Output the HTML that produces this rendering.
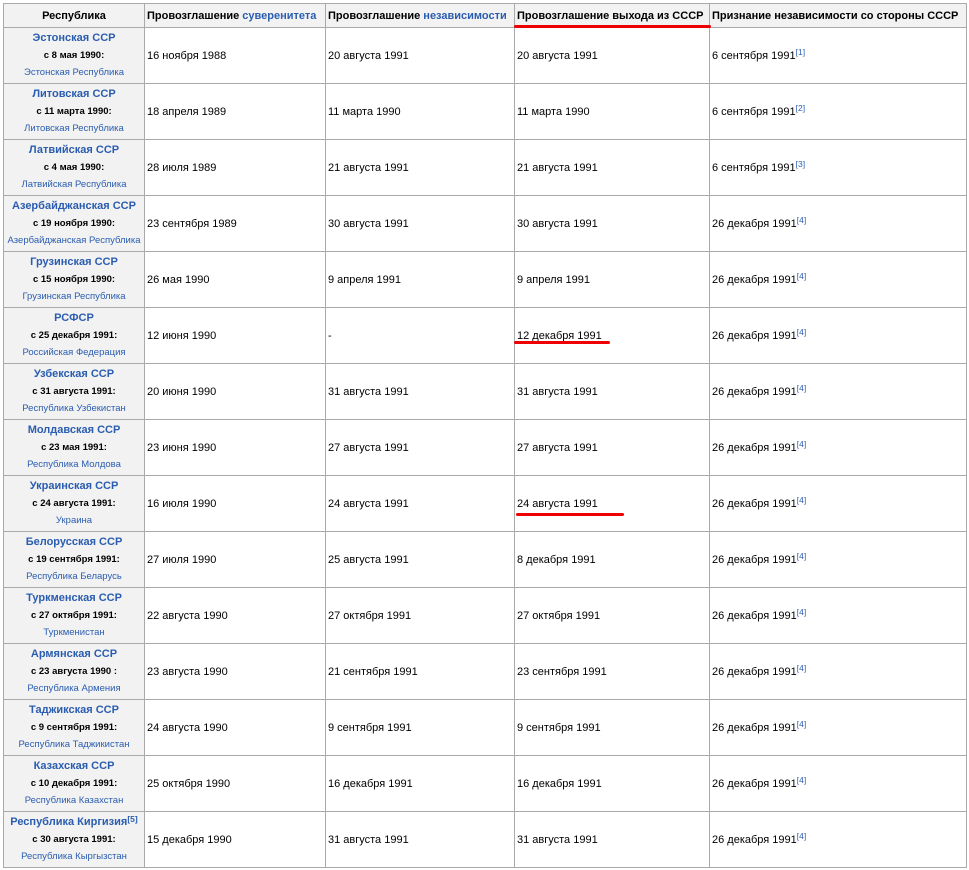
<!DOCTYPE html>
<html><head><meta charset="utf-8"><style>
body{margin:0;background:#fff;font-family:"Liberation Sans","DejaVu Sans",sans-serif;font-size:11px;color:#000}
table{position:absolute;left:3px;top:3px;border-collapse:collapse;table-layout:fixed;width:963px}
td,th{border:1px solid #aaa;padding:0 2px;overflow:hidden;white-space:nowrap}
th{background:#f2f2f2;height:23px;font-weight:bold;font-size:11px;text-align:center}
td{height:55px;font-size:11px}
td.r{background:#f2f2f2;text-align:center;line-height:17px;font-size:9.5px;font-weight:bold}
td.r a{font-size:11px}
a{color:#2a5db0;text-decoration:none}
td.r span.s{font-weight:normal;color:#2a5db0}
sup{font-size:8.5px;color:#2a5db0;vertical-align:top;position:relative;top:-3px}
.red{position:absolute;height:3px;background:#e00;border-radius:2px}
</style></head><body>
<table>
<colgroup><col style="width:141px"><col style="width:181px"><col style="width:189px"><col style="width:195px"><col style="width:257px"></colgroup>
<tr><th>Республика</th><th style="text-align:left">Провозглашение <a>суверенитета</a></th><th style="text-align:left">Провозглашение <a>независимости</a></th><th style="text-align:left">Провозглашение выхода из СССР</th><th style="text-align:left">Признание независимости со стороны СССР</th></tr>
<tr><td class="r"><a>Эстонская ССР</a><br>с 8 мая 1990:<br><span class="s">Эстонская Республика</span></td><td>16 ноября 1988</td><td>20 августа 1991</td><td>20 августа 1991</td><td>6 сентября 1991<sup>[1]</sup></td></tr>
<tr><td class="r"><a>Литовская ССР</a><br>с 11 марта 1990:<br><span class="s">Литовская Республика</span></td><td>18 апреля 1989</td><td>11 марта 1990</td><td>11 марта 1990</td><td>6 сентября 1991<sup>[2]</sup></td></tr>
<tr><td class="r"><a>Латвийская ССР</a><br>с 4 мая 1990:<br><span class="s">Латвийская Республика</span></td><td>28 июля 1989</td><td>21 августа 1991</td><td>21 августа 1991</td><td>6 сентября 1991<sup>[3]</sup></td></tr>
<tr><td class="r"><a>Азербайджанская ССР</a><br>с 19 ноября 1990:<br><span class="s">Азербайджанская Республика</span></td><td>23 сентября 1989</td><td>30 августа 1991</td><td>30 августа 1991</td><td>26 декабря 1991<sup>[4]</sup></td></tr>
<tr><td class="r"><a>Грузинская ССР</a><br>с 15 ноября 1990:<br><span class="s">Грузинская Республика</span></td><td>26 мая 1990</td><td>9 апреля 1991</td><td>9 апреля 1991</td><td>26 декабря 1991<sup>[4]</sup></td></tr>
<tr><td class="r"><a>РСФСР</a><br>с 25 декабря 1991:<br><span class="s">Российская Федерация</span></td><td>12 июня 1990</td><td>-</td><td>12 декабря 1991</td><td>26 декабря 1991<sup>[4]</sup></td></tr>
<tr><td class="r"><a>Узбекская ССР</a><br>с 31 августа 1991:<br><span class="s">Республика Узбекистан</span></td><td>20 июня 1990</td><td>31 августа 1991</td><td>31 августа 1991</td><td>26 декабря 1991<sup>[4]</sup></td></tr>
<tr><td class="r"><a>Молдавская ССР</a><br>с 23 мая 1991:<br><span class="s">Республика Молдова</span></td><td>23 июня 1990</td><td>27 августа 1991</td><td>27 августа 1991</td><td>26 декабря 1991<sup>[4]</sup></td></tr>
<tr><td class="r"><a>Украинская ССР</a><br>с 24 августа 1991:<br><span class="s">Украина</span></td><td>16 июля 1990</td><td>24 августа 1991</td><td>24 августа 1991</td><td>26 декабря 1991<sup>[4]</sup></td></tr>
<tr><td class="r"><a>Белорусская ССР</a><br>с 19 сентября 1991:<br><span class="s">Республика Беларусь</span></td><td>27 июля 1990</td><td>25 августа 1991</td><td>8 декабря 1991</td><td>26 декабря 1991<sup>[4]</sup></td></tr>
<tr><td class="r"><a>Туркменская ССР</a><br>с 27 октября 1991:<br><span class="s">Туркменистан</span></td><td>22 августа 1990</td><td>27 октября 1991</td><td>27 октября 1991</td><td>26 декабря 1991<sup>[4]</sup></td></tr>
<tr><td class="r"><a>Армянская ССР</a><br>с 23 августа 1990 :<br><span class="s">Республика Армения</span></td><td>23 августа 1990</td><td>21 сентября 1991</td><td>23 сентября 1991</td><td>26 декабря 1991<sup>[4]</sup></td></tr>
<tr><td class="r"><a>Таджикская ССР</a><br>с 9 сентября 1991:<br><span class="s">Республика Таджикистан</span></td><td>24 августа 1990</td><td>9 сентября 1991</td><td>9 сентября 1991</td><td>26 декабря 1991<sup>[4]</sup></td></tr>
<tr><td class="r"><a>Казахская ССР</a><br>с 10 декабря 1991:<br><span class="s">Республика Казахстан</span></td><td>25 октября 1990</td><td>16 декабря 1991</td><td>16 декабря 1991</td><td>26 декабря 1991<sup>[4]</sup></td></tr>
<tr><td class="r"><a>Республика Киргизия</a><sup>[5]</sup><br>с 30 августа 1991:<br><span class="s">Республика Кыргызстан</span></td><td>15 декабря 1990</td><td>31 августа 1991</td><td>31 августа 1991</td><td>26 декабря 1991<sup>[4]</sup></td></tr>
</table>
<div class="red" style="left:514px;top:25px;width:197px"></div>
<div class="red" style="left:514px;top:341px;width:96px"></div>
<div class="red" style="left:516px;top:513px;width:108px"></div>
</body></html>
